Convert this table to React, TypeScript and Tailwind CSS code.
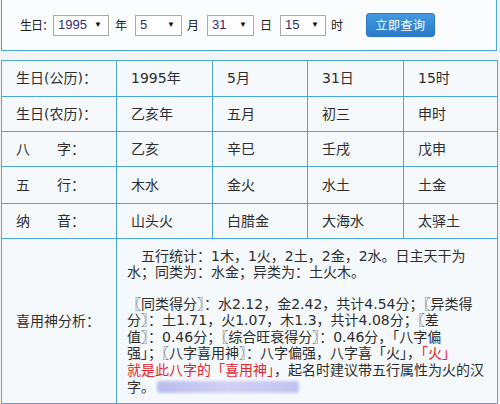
import React from "react"

const rows = [
  { label: "生日(公历)：", cells: ["1995年", "5月", "31日", "15时"], h: "h-[36px]" },
  { label: "生日(农历)：", cells: ["乙亥年", "五月", "初三", "申时"], h: "h-[35px]" },
  { label: ["八", "字："], cells: ["乙亥", "辛巳", "壬戌", "戊申"], h: "h-[35px]" },
  { label: ["五", "行："], cells: ["木水", "金火", "水土", "土金"], h: "h-[37px]" },
  { label: ["纳", "音："], cells: ["山头火", "白腊金", "大海水", "太驿土"], h: "h-[35px]" },
]

function FakeSelect({ value, w }: { value: string; w: string }) {
  return (
    <div
      className={`${w} shrink-0 h-[21px] flex items-center justify-between bg-white border border-[#a9a9a9] pl-[4px] pr-[6px] text-[13px] text-[#352c6e] font-['Liberation_Sans',sans-serif]`}
    >
      <span>{value}</span>
      <span className="text-[8px] text-[#111]">▼</span>
    </div>
  )
}

export default function App() {
  return (
    <div className="w-[500px] h-[404px] overflow-hidden bg-[#f2f3f5] text-[#2a2a2a] font-['DejaVu_Sans','Noto_Sans_CJK_SC',sans-serif]">
      {/* query bar */}
      <div className="ml-px w-[496px] h-[51px] border-x border-b border-[#4aa9d5] bg-[#fbfcfe] flex items-center pl-[18px] text-[12px] text-[#222] whitespace-nowrap font-['Noto_Sans_CJK_SC',sans-serif]">
        <span className="w-[33px] shrink-0 tracking-[-1px]">生日：</span>
        <FakeSelect value="1995" w="w-[56px]" />
        <span className="w-[26px] shrink-0 pl-[6px]">年</span>
        <FakeSelect value="5" w="w-[47px]" />
        <span className="w-[25px] shrink-0 pl-[5px]">月</span>
        <FakeSelect value="31" w="w-[47px]" />
        <span className="w-[26px] shrink-0 pl-[6px]">日</span>
        <FakeSelect value="15" w="w-[46px]" />
        <span className="w-[40px] shrink-0 pl-[5px]">时</span>
        <button className="w-[69px] shrink-0 h-[24px] rounded-[3px] border border-[#2b78c2] bg-gradient-to-b from-[#439ae0] to-[#2a7bc8] text-white text-[12px] tracking-[0.5px]">
          立即查询
        </button>
      </div>

      {/* result table */}
      <table className="mt-[9px] ml-px w-[496px] border-collapse table-fixed bg-[#f6f9fc] text-[14px] text-[#2e2e2e]">
        <colgroup>
          <col className="w-[115px]" />
          <col className="w-[96px]" />
          <col className="w-[95px]" />
          <col className="w-[96px]" />
          <col className="w-[94px]" />
        </colgroup>
        <tbody>
          {rows.map((r, i) => (
            <tr key={i} className={r.h}>
              <td className="border border-[#4aa9d5] pl-[14px] align-middle whitespace-nowrap">
                {Array.isArray(r.label) ? (
                  <>
                    <span className="mr-[27px]">{r.label[0]}</span>
                    {r.label[1]}
                  </>
                ) : (
                  r.label
                )}
              </td>
              {r.cells.map((c, j) => (
                <td key={j} className="border border-[#4aa9d5] pl-[14px] align-middle whitespace-nowrap">
                  {c}
                </td>
              ))}
            </tr>
          ))}
          <tr className="h-[165px]">
            <td className="border border-[#4aa9d5] pl-[14px] align-middle whitespace-nowrap">喜用神分析：</td>
            <td colSpan={4} className="border border-[#4aa9d5] pl-[10px] pt-[1px] align-middle whitespace-nowrap leading-[16.6px]">
              <div>　五行统计：1木，1火，2土，2金，2水。日主天干为</div>
              <div>水；同类为：水金；异类为：土火木。</div>
              <div className="mt-[14.5px]">〖同类得分〗：水2.12，金2.42，共计4.54分；〖异类得</div>
              <div>分〗：土1.71，火1.07，木1.3，共计4.08分；〖差</div>
              <div>值〗：0.46分；〖综合旺衰得分〗：0.46分，「八字偏</div>
              <div>
                强」；〖八字喜用神〗：八字偏强，八字喜「火」，<span className="text-[#e5262b]">「火」</span>
              </div>
              <div>
                <span className="text-[#e5262b]">就是此八字的「喜用神」</span>，起名时建议带五行属性为火的汉
              </div>
              <div className="flex items-center">
                字。
                <span className="ml-[2px] inline-block w-[142px] h-[12px] rounded-[3px] bg-gradient-to-r from-[#b9bcee] via-[#d3d0f5] to-[#bfc2f0] blur-[1.5px]" />
              </div>
            </td>
          </tr>
        </tbody>
      </table>
    </div>
  )
}
